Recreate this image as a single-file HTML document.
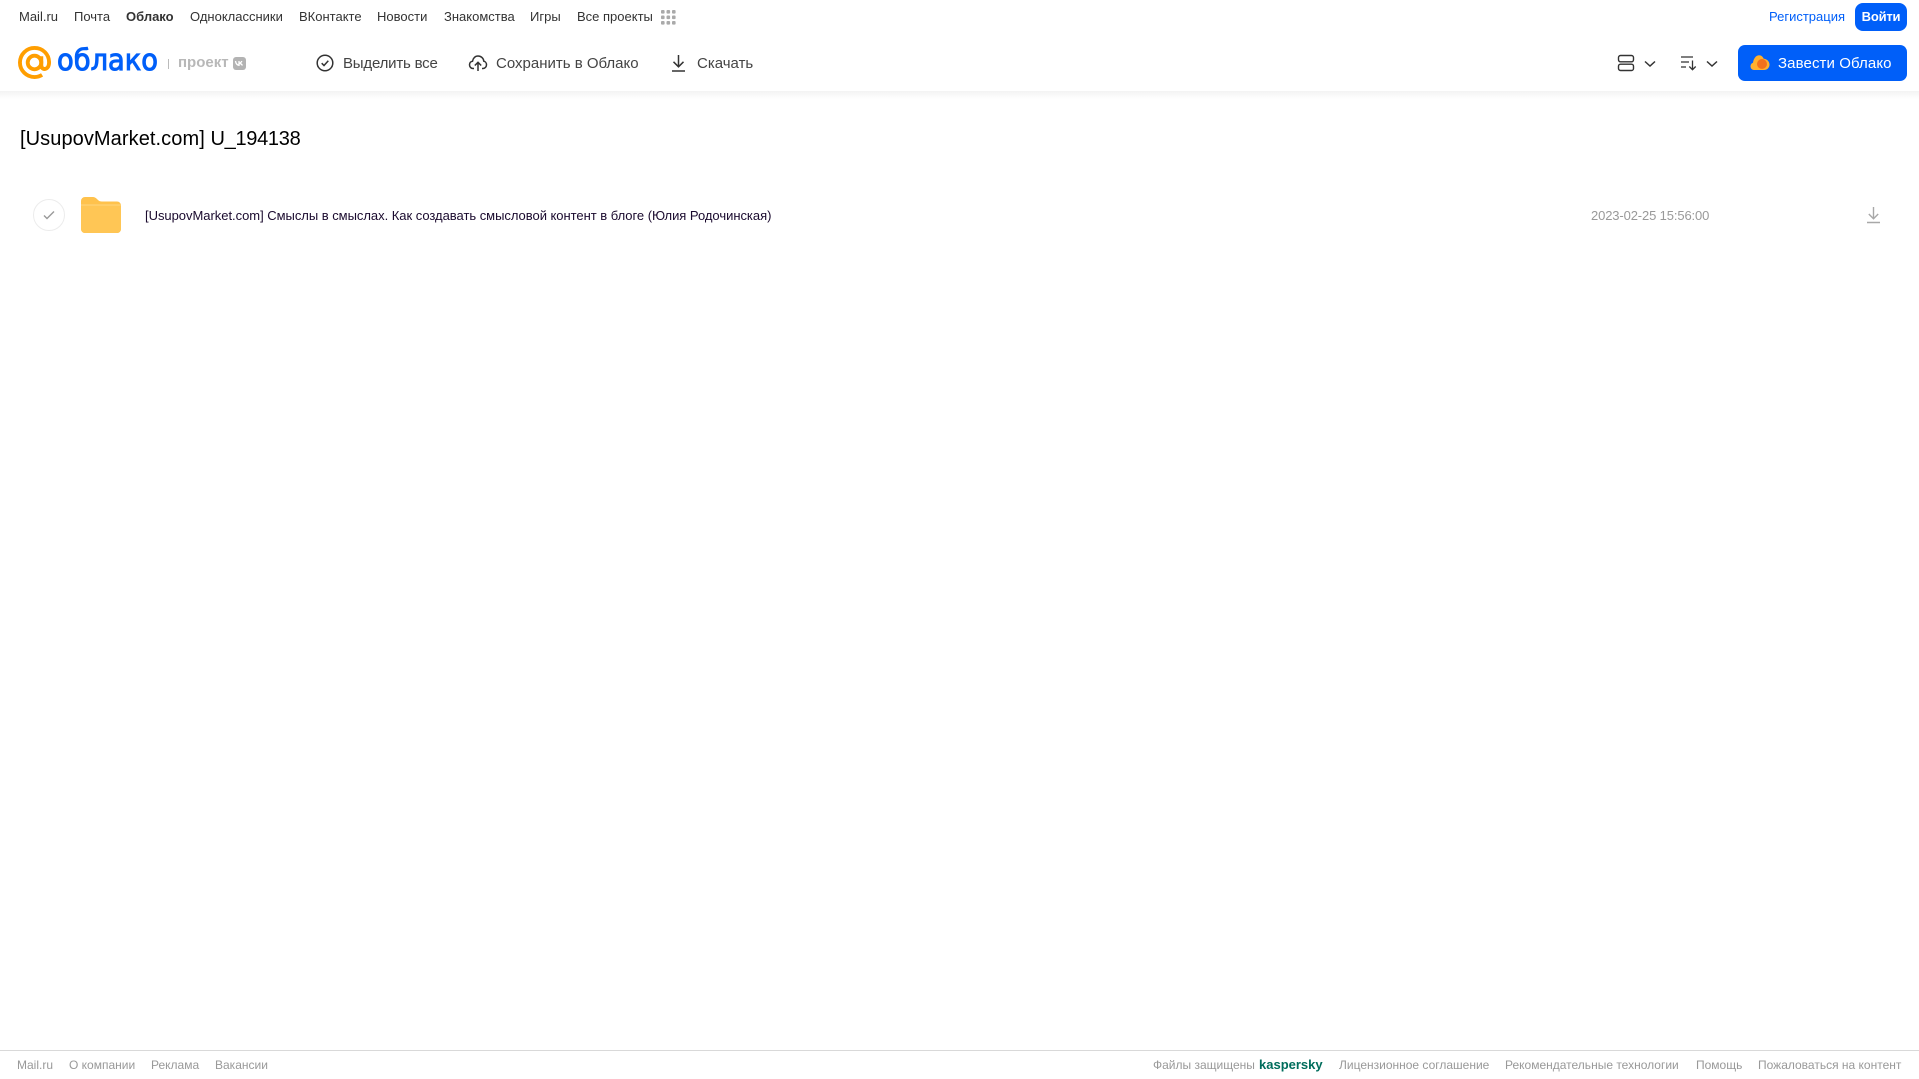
<!DOCTYPE html>
<html lang="ru"><head><meta charset="utf-8"><title>Облако</title>
<style>
html,body{margin:0;padding:0;background:#fff;width:1919px;height:1079px;overflow:hidden;font-family:"Liberation Sans",Arial,sans-serif}
.t{position:absolute;white-space:nowrap;line-height:18px}
.n{top:8px;font-size:13px;color:#333}
.a{top:55px;font-size:15px;color:#444}
.f{top:1056px;font-size:12px;color:#999}
svg{position:absolute;display:block}
#shadow{position:absolute;left:0;top:91px;width:1919px;height:8px;background:linear-gradient(#f3f3f3,#fff)}
</style></head><body>
<div id="shadow"></div>
<span class="t n" style="left:19px">Mail.ru</span>
<span class="t n" style="left:74px">Почта</span>
<span class="t n" style="left:126px;font-weight:bold">Облако</span>
<span class="t n" style="left:190px">Одноклассники</span>
<span class="t n" style="left:299px">ВКонтакте</span>
<span class="t n" style="left:377px">Новости</span>
<span class="t n" style="left:444px">Знакомства</span>
<span class="t n" style="left:530px">Игры</span>
<span class="t n" style="left:577px">Все проекты</span>
<svg style="left:661px;top:10px" width="15" height="15" fill="#aaa"><rect x="0" y="0" width="3.6" height="3.6" rx="1"/><rect x="5.5" y="0" width="3.6" height="3.6" rx="1"/><rect x="11" y="0" width="3.6" height="3.6" rx="1"/><rect x="0" y="5.5" width="3.6" height="3.6" rx="1"/><rect x="5.5" y="5.5" width="3.6" height="3.6" rx="1"/><rect x="11" y="5.5" width="3.6" height="3.6" rx="1"/><rect x="0" y="11" width="3.6" height="3.6" rx="1"/><rect x="5.5" y="11" width="3.6" height="3.6" rx="1"/><rect x="11" y="11" width="3.6" height="3.6" rx="1"/></svg>
<span class="t" style="left:1769px;top:8px;font-size:13px;color:#005ff9">Регистрация</span>
<div style="position:absolute;left:1855px;top:3px;width:52px;height:28px;background:#005ff9;border-radius:8px;color:#fff;font-size:13px;font-weight:bold;letter-spacing:-.2px;line-height:28px;text-align:center">Войти</div>

<svg style="left:18px;top:46px" width="33" height="33" viewBox="0 0 34 34" fill="none" stroke="#ff9e00" stroke-width="4"><circle cx="17" cy="17" r="7"/><path d="M24 10.500V19.500c0 2.800 1.400 4.200 3.300 4.200 2.600 0 4.500-2.400 4.700-6.200C32.300 8.500 25.500 2 17 2 8.700 2 2 8.700 2 17s6.700 15 15 15c3 0 5.600-.8 7.800-2.200"/></svg>
<svg style="left:56px;top:44px" width="106" height="36"><text x="1" y="26" font-family="DejaVu Sans,Liberation Sans,sans-serif" font-size="29" fill="#005ff9" stroke="#005ff9" stroke-width="1" textLength="101" lengthAdjust="spacingAndGlyphs">облако</text></svg>
<div style="position:absolute;left:168px;top:59px;width:1px;height:10px;background:#bbb"></div>
<span class="t" style="left:178px;top:54px;font-size:15px;font-weight:bold;color:#b8b8b8">проект</span>
<div style="position:absolute;left:233px;top:57px;width:13px;height:13px;background:#b3b3b3;border-radius:3px"></div>
<svg style="left:234px;top:60px" width="11" height="7" fill="none" stroke="#fff" stroke-width="1.3"><path d="M1.500 1c.3 2.500 1.500 4 3.500 4.300V1M5 3c1.500 0 2.500-1 2.800-2M5 3.200c1.500.2 2.800 1 3.400 2.300"/></svg>

<svg style="left:316px;top:54px" width="18" height="18" fill="none" stroke="#333" stroke-width="1.5"><circle cx="9" cy="9" r="7.800"/><path d="M5.700 9.200l2.300 2.300 4.300-4.700"/></svg>
<span class="t a" style="left:343px;letter-spacing:-.2px">Выделить все</span>
<svg style="left:468px;top:54px" width="20" height="18" fill="none" stroke="#333" stroke-width="1.500"><path d="M6 14.500H5C3 14.500 1.500 12.900 1.500 10.800c0-1.900 1.200-3.400 3-3.600C5 4 7.300 2 10 2c3 0 5.500 2.200 5.800 5.200 1.500.3 2.700 1.800 2.700 3.600 0 2-1.500 3.700-3.500 3.700h-1"/><path d="M10 17V8.500M6.800 11.500L10 8.300l3.200 3.200"/></svg>
<span class="t a" style="left:496px">Сохранить в Облако</span>
<svg style="left:671px;top:54px" width="15" height="18" fill="none" stroke="#333" stroke-width="1.500"><path d="M7.500 1v11.500M2.500 7.800l5 5 5-5M1 17h13"/></svg>
<span class="t a" style="left:697px">Скачать</span>

<svg style="left:1617px;top:54px" width="18" height="18" fill="none" stroke="#333" stroke-width="1.400"><rect x="1.500" y="1.500" width="15" height="6.300" rx="2"/><rect x="1.500" y="10.200" width="15" height="6.300" rx="2"/></svg>
<svg style="left:1644px;top:60px" width="12" height="8" fill="none" stroke="#333" stroke-width="1.500"><path d="M1 1.500l5 4.500 5-4.500"/></svg>
<svg style="left:1680px;top:55px" width="18" height="16" fill="none" stroke="#333" stroke-width="1.300"><path d="M1 2h12M1 7h8M1 12h5M12.500 5.500v9M9.300 11.500l3.200 3.200 3.200-3.200"/></svg>
<svg style="left:1706px;top:60px" width="12" height="8" fill="none" stroke="#333" stroke-width="1.500"><path d="M1 1.500l5 4.500 5-4.500"/></svg>

<div style="position:absolute;left:1738px;top:45px;width:169px;height:36px;background:#005ff9;border-radius:7px"></div>
<svg style="left:1750px;top:54px" width="20" height="17"><path d="M4 16C1.800 16 .5 14.200.5 12.300c0-1.700 1-3 2.500-3.500C3.300 5.500 5.500 1.200 9 1.200c2.500 0 4 1.700 4.700 3.500 3.300.2 5.800 2.800 5.800 5.900 0 3-2.400 5.400-5.500 5.400z" fill="#ffb02e"/><circle cx="12" cy="10" r="5" fill="#f2711c"/></svg>
<span class="t" style="left:1778px;top:55px;font-size:15px;color:#fff;letter-spacing:.1px">Завести Облако</span>

<span class="t" style="left:20px;top:127px;font-size:20px;line-height:24px;color:#000;letter-spacing:.08px">[UsupovMarket.com]</span>
<span class="t" style="left:210.500px;top:127px;font-size:20px;line-height:24px;color:#000;letter-spacing:-.3px">U_194138</span>

<div style="position:absolute;left:33px;top:199px;width:30px;height:30px;border:1px solid #ececec;border-radius:50%"></div>
<svg style="left:43px;top:210px" width="12" height="10" fill="none" stroke="#999" stroke-width="1.400"><path d="M1 5.500l3 3 7-7"/></svg>
<svg style="left:81px;top:197px" width="40" height="36"><path d="M0 4a4 4 0 0 1 4-4h7c3 0 4 1 5.500 2.500C18 4 19 4.500 21 4.500H36a4 4 0 0 1 4 4V32a4 4 0 0 1-4 4H4a4 4 0 0 1-4-4z" fill="#ffc24c"/><path d="M0 10a2 2 0 0 1 2-2H38a2 2 0 0 1 2 2V32a4 4 0 0 1-4 4H4a4 4 0 0 1-4-4z" fill="#ffc655"/><path d="M0 8H40" stroke="#ffd580" stroke-width="1"/></svg>
<span class="t" style="left:145px;top:207px;font-size:13px;color:#1a0a2e;letter-spacing:-.03px">[UsupovMarket.com] Смыслы в смыслах. Как создавать смысловой контент в блоге (Юлия Родочинская)</span>
<span class="t" style="left:1591px;top:207px;font-size:13px;color:#999;letter-spacing:-.13px">2023-02-25 15:56:00</span>
<svg style="left:1866px;top:206px" width="15" height="18" fill="none" stroke="#a8a8a8" stroke-width="1.400"><path d="M7.500 1v11.500M2.800 8l4.700 4.700L12.200 8M1 16.500h13"/></svg>

<div style="position:absolute;left:0;top:1050px;width:1919px;height:1px;background:#d9d9d9"></div>
<span class="t f" style="left:17px">Mail.ru</span>
<span class="t f" style="left:69px">О компании</span>
<span class="t f" style="left:151px">Реклама</span>
<span class="t f" style="left:215px">Вакансии</span>
<span class="t f" style="left:1153px">Файлы защищены</span>
<span class="t f" style="left:1259px;font-weight:bold;font-size:13px;color:#006d5c">kaspersky</span>
<span class="t f" style="left:1339px">Лицензионное соглашение</span>
<span class="t f" style="left:1505px">Рекомендательные технологии</span>
<span class="t f" style="left:1696px">Помощь</span>
<span class="t f" style="left:1758px">Пожаловаться на контент</span>
</body></html>
